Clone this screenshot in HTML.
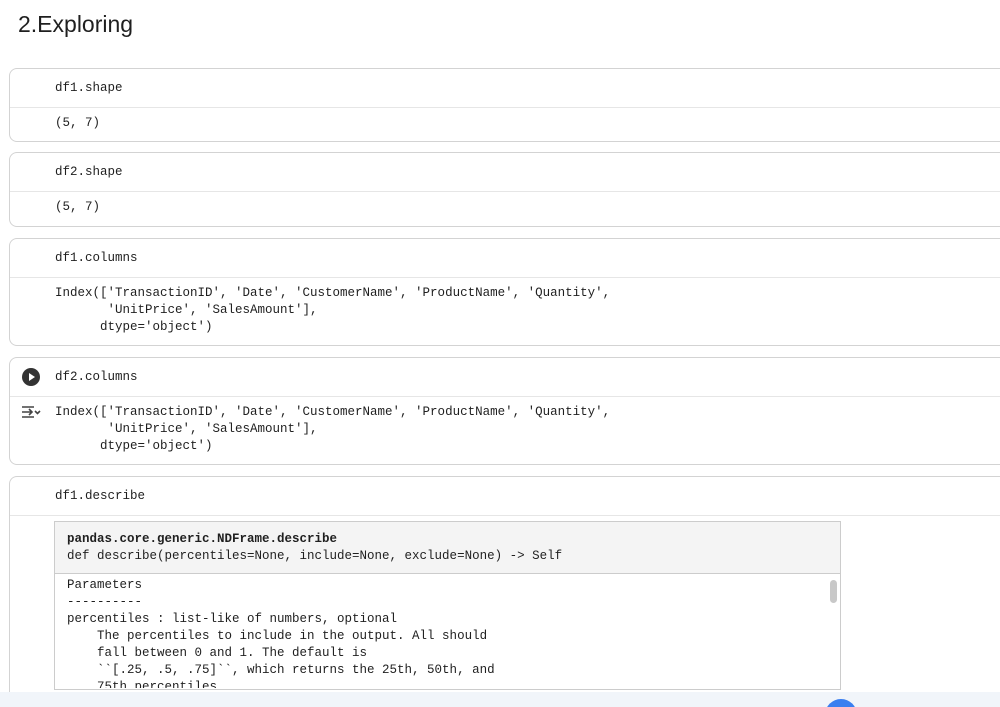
<!DOCTYPE html>
<html style="height:707px;overflow:hidden"><head><style>
body{margin:0;width:1000px;height:707px;overflow:hidden;background:#fff;font-family:"Liberation Sans",sans-serif;position:relative}
h1{position:absolute;left:18px;top:11px;margin:0;font-weight:400;font-size:23px;color:#1f1f1f}
.cell{position:absolute;left:9px;width:1000px;border:1px solid #d3d3d3;border-radius:8px;background:#fff}
.in{height:38px;border-bottom:1px solid #e6e6e6;position:relative}
.m{font-family:"Liberation Mono",monospace;font-size:12.5px;color:#1f1f1f;white-space:pre;line-height:17px}
.in .m{position:absolute;left:45px;top:11px}
.out{position:relative;padding:7px 0 0 45px}
.play{position:absolute;left:12px;top:10px;width:18px;height:18px;border-radius:50%;background:#333}
.play:after{content:"";position:absolute;left:7px;top:5px;border-left:6px solid #fff;border-top:4px solid transparent;border-bottom:4px solid transparent}
.doc{position:absolute;left:54px;top:521px;width:785px;height:167px;border:1px solid #ccc;background:#fff}
.dh{background:#f4f4f4;height:52px;border-bottom:1px solid #ccc;padding:9px 0 0 12px;box-sizing:border-box}
.db{padding:3px 0 0 12px}
</style></head><body>
<h1>2.Exploring</h1>
<div class="cell" style="top:68px;height:72px"><div class="in"><div class="m">df1.shape</div></div><div class="out m">(5, 7)</div></div>
<div class="cell" style="top:152px;height:73px"><div class="in"><div class="m">df2.shape</div></div><div class="out m">(5, 7)</div></div>
<div class="cell" style="top:238px;height:106px"><div class="in"><div class="m">df1.columns</div></div><div class="out m">Index(['TransactionID', 'Date', 'CustomerName', 'ProductName', 'Quantity',
       'UnitPrice', 'SalesAmount'],
      dtype='object')</div></div>
<div class="cell" style="top:357px;height:106px"><div class="in"><div class="play"></div><div class="m">df2.columns</div></div><div class="out m"><svg style="position:absolute;left:11px;top:8px" width="20" height="14" viewBox="0 0 20 14" fill="none" stroke="#444" stroke-width="1.6"><path d="M1 2h12M1 7h9M1 12h12M8 4l3 3-3 3M14 6l2.5 2.5L19 6"/></svg>Index(['TransactionID', 'Date', 'CustomerName', 'ProductName', 'Quantity',
       'UnitPrice', 'SalesAmount'],
      dtype='object')</div></div>
<div class="cell" style="top:476px;height:215px;border-bottom:none;border-radius:8px 8px 0 0"><div class="in"><div class="m">df1.describe</div></div></div>
<div class="doc"><div class="dh m"><b>pandas.core.generic.NDFrame.describe</b>
def describe(percentiles=None, include=None, exclude=None) -&gt; Self</div>
<div class="db m" style="height:111px;overflow:hidden">Parameters
----------
percentiles : list-like of numbers, optional
    The percentiles to include in the output. All should
    fall between 0 and 1. The default is
    ``[.25, .5, .75]``, which returns the 25th, 50th, and
    75th percentiles.</div>
<div style="position:absolute;right:3px;top:58px;width:7px;height:23px;border-radius:4px;background:#c8c8c8"></div></div>
<div style="position:absolute;left:0;top:692px;width:1000px;height:15px;background:#f1f5fa"></div>
<div style="position:absolute;left:825px;top:699px;width:32px;height:32px;border-radius:50%;background:#3a7ff0"></div>
</body></html>
